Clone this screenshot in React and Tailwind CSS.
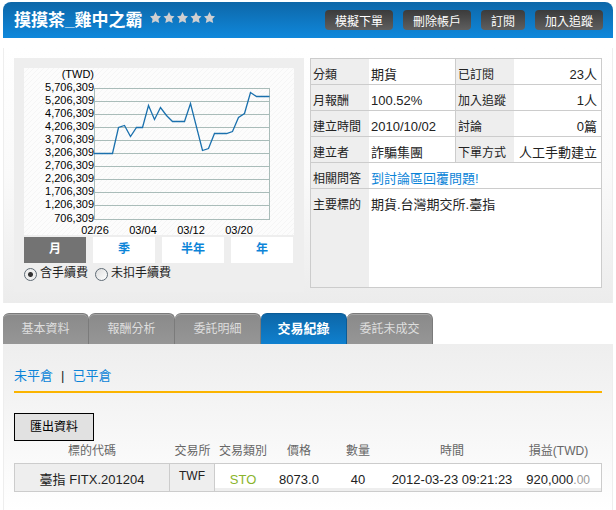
import React, { useState } from "react";

const axisLabels = [
  ["5,706,309", 20],
  ["5,206,309", 33],
  ["4,706,309", 46],
  ["4,206,309", 59],
  ["3,706,309", 72],
  ["3,206,309", 85],
  ["2,706,309", 98],
  ["2,206,309", 111],
  ["1,706,309", 124],
  ["1,206,309", 137],
  ["706,309", 151],
];

const dateLabels = [
  ["02/26", 71],
  ["03/04", 119],
  ["03/12", 167],
  ["03/20", 215],
];

const equity =
  "70,85.5 88.5,85.5 94.5,59.5 100.5,57.5 106.5,68.5 112.5,59.5 118.5,59.5 124.5,37.5 130.5,51.5 136.5,39.5 142.5,47.5 148.5,53.5 160.5,53.5 166.5,35.5 178.5,82.5 184.5,80.5 190.5,65.5 202.5,65.5 208.5,63.5 214.5,49.5 220.5,45.5 226.5,24.5 232.5,28.5 245.5,28.5";

function Stars() {
  return (
    <svg width="66" height="12" viewBox="0 0 66 12" fill="#cfcfd1" role="img" aria-label="評等">
      {[0, 1, 2, 3, 4].map((i) => (
        <path
          key={i}
          transform={`translate(${i * 13.5} 0)`}
          d="M5.5 0 L7.3 3.7 L11 4.2 L8.4 7 L9.2 11 L5.5 9.2 L1.8 11 L2.6 7 L0 4.2 L3.7 3.7 Z"
        />
      ))}
    </svg>
  );
}

function Chart() {
  return (
    <svg width="270" height="167" viewBox="0 0 270 167" className="block">
      <defs>
        <pattern id="hatch" width="5" height="5" patternUnits="userSpaceOnUse">
          <rect width="5" height="5" fill="#fcfcfc" />
          <path d="M0 5 L5 0" stroke="#f5f5f5" strokeWidth="1" />
        </pattern>
      </defs>
      <rect width="270" height="167" fill="url(#hatch)" />
      <g stroke="#a9bcb9">
        {axisLabels.map(([t, y]) => (
          <path key={t} d={`M70 ${y + 0.5} H246`} />
        ))}
        <path d="M70.5 20 V152 M245.5 20 V152" />
      </g>
      <polyline points={equity} fill="none" stroke="#1a70ad" strokeWidth="1.3" />
      <g fontSize="11" fill="#000" className="font-['Liberation_Sans',sans-serif]">
        <text x="70" y="10" textAnchor="end">(TWD)</text>
        {axisLabels.map(([t, y]) => (
          <text key={t} x="70" y={y + 3} textAnchor="end">{t}</text>
        ))}
        {dateLabels.map(([t, x]) => (
          <text key={t} x={x} y="166" textAnchor="middle">{t}</text>
        ))}
      </g>
    </svg>
  );
}

function Label({ children, divider, top = true }) {
  return (
    <th
      scope="row"
      className={`bg-[#eee] pt-2 pl-0.5 text-left align-top text-xs leading-4 font-normal whitespace-nowrap border-[#ccc] ${divider ? "border-l" : ""} ${top ? "border-t" : ""}`}
    >
      {children}
    </th>
  );
}

function Value({ children, right, top = true, span }) {
  return (
    <td
      colSpan={span}
      className={`bg-white pt-2 align-top text-[13px] leading-4 whitespace-nowrap border-[#ccc] ${right ? "pr-1 text-right" : "pl-0.5"} ${top ? "border-t" : ""}`}
    >
      {children}
    </td>
  );
}

function InfoTable() {
  const rows = [
    ["分類", "期貨", "已訂閱", "23人"],
    ["月報酬", "100.52%", "加入追蹤", "1人"],
    ["建立時間", "2010/10/02", "討論", "0篇"],
    ["建立者", "詐騙集團", "下單方式", "人工手動建立"],
  ];
  return (
    <table className="h-[230px] min-w-0 flex-1 table-fixed border-separate border-spacing-0 border border-[#ccc]">
      <colgroup>
        <col className="w-[58px]" />
        <col className="w-[86px]" />
        <col className="w-[59px]" />
        <col />
      </colgroup>
      <tbody>
        {rows.map((r, i) => (
          <tr key={r[0]} className={i ? "h-[26px]" : "h-[25px]"}>
            <Label top={i > 0}>{r[0]}</Label>
            <Value top={i > 0}>{r[1]}</Value>
            <Label top={i > 0} divider>{r[2]}</Label>
            <Value top={i > 0} right>{r[3]}</Value>
          </tr>
        ))}
        <tr className="h-[26px]">
          <Label>相關問答</Label>
          <Value span={3}><a href="#discuss" className="text-[#0b84d8]">到討論區回覆問題!</a></Value>
        </tr>
        <tr>
          <Label>主要標的</Label>
          <Value span={3}>期貨.台灣期交所.臺指</Value>
        </tr>
      </tbody>
    </table>
  );
}

export default function App() {
  const [range, setRange] = useState("月");
  const [tab, setTab] = useState("交易紀錄");
  const [fee, setFee] = useState("with");
  const cell = "border-y border-[#ccc] bg-white pt-1 shadow-[inset_0_-3px_#eee]";

  return (
    <main className="min-h-[510px] bg-white px-[3px] pt-0.5 font-['Liberation_Sans','Noto_Sans_CJK_TC',sans-serif] text-[#222]">
      <header className="flex h-9 items-start rounded-t-lg bg-linear-to-b from-[#0d67a8] to-[#0f88dc] pr-2.5 pl-[11px]">
        <h1 className="pt-[7px] text-[17px] leading-6 font-bold whitespace-nowrap text-white">摸摸茶_雞中之霸</h1>
        <div className="ml-2 pt-2.5"><Stars /></div>
        <nav className="ml-auto flex gap-2.5 pt-2">
          {["模擬下單", "刪除帳戶", "訂閱", "加入追蹤"].map((t) => (
            <button key={t} className="h-5 rounded-sm bg-linear-to-b from-[#3b3b3b] to-[#5f5f5f] px-2.5 pt-1 text-xs leading-4 whitespace-nowrap text-white">
              {t}
            </button>
          ))}
        </nav>
      </header>

      <section className="mt-2.5 flex items-start gap-1.5 border-x border-[#eee] bg-linear-to-b from-white via-[#fafafa] to-[#ececec] px-2.5 pt-2.5 pb-[11px]">
        <div className="h-[234px] w-[290px] shrink-0 bg-[#eee] p-2.5">
          <Chart />
          <div className="mt-0.5 flex gap-[7px]">
            {["月", "季", "半年", "年"].map((t) => (
              <button
                key={t}
                onClick={() => setRange(t)}
                className={`h-[26px] w-[62px] pb-0.5 text-xs font-bold ${range === t ? "bg-[#737373] text-white" : "bg-white text-[#0b84d8]"}`}
              >
                {t}
              </button>
            ))}
          </div>
          <div className="mt-0.5 flex gap-[7px] text-xs leading-4">
            {[["with", "含手續費"], ["without", "未扣手續費"]].map(([v, t]) => (
              <label key={v} className="flex items-center gap-[3px]">
                <input
                  type="radio"
                  name="fee"
                  checked={fee === v}
                  onChange={() => setFee(v)}
                  className="mt-0.5 size-[13px] appearance-none rounded-full border border-[#5f6b75] bg-linear-to-br from-[#ddd] to-white checked:bg-[radial-gradient(circle,#333_2px,#eee_3px)]"
                />
                {t}
              </label>
            ))}
          </div>
        </div>
        <InfoTable />
      </section>

      <div role="tablist" className="mt-2.5 flex">
        {["基本資料", "報酬分析", "委託明細", "交易紀錄", "委託未成交"].map((t) => (
          <button
            key={t}
            role="tab"
            aria-selected={tab === t}
            onClick={() => setTab(t)}
            className={`h-[31px] w-[86px] rounded-t-md border-t border-r whitespace-nowrap ${
              tab === t
                ? "border-[#0a5b96] bg-linear-to-b from-[#0d67a8] to-[#0f80cf] text-[13px] font-bold text-white"
                : "border-[#7b7b7b] bg-linear-to-b from-[#8a8a8a] to-[#969696] text-xs text-[#dedede] shadow-[inset_0_1px_#a5a5a5]"
            }`}
          >
            {t}
          </button>
        ))}
      </div>

      <section className="min-h-[166px] border-x border-[#eee] bg-linear-to-b from-[#eee] to-white px-2.5">
        <div className="flex h-[49px] items-start gap-2 border-b-2 border-[#fbb400] pt-6 text-[13px] leading-4">
          <a href="#open" className="text-[#0b84d8]">未平倉</a>
          <span>|</span>
          <a href="#closed" className="text-[#0b84d8]">已平倉</a>
        </div>
        <button className="mt-5 block h-7 w-20 border border-black bg-[#e1e1e1] text-xs text-black">匯出資料</button>
        <table className="w-full table-fixed border-separate border-spacing-0 text-center text-[13px] leading-4 whitespace-nowrap">
          <colgroup>
            <col className="w-[156px]" />
            <col className="w-[45px]" />
            <col className="w-[56px]" />
            <col className="w-[56px]" />
            <col className="w-[62px]" />
            <col className="w-[126px]" />
            <col />
          </colgroup>
          <thead>
            <tr className="h-[22px] text-xs text-[#666]">
              {["標的代碼", "交易所", "交易類別", "價格", "數量", "時間", "損益(TWD)"].map((t) => (
                <th key={t} scope="col" className="p-0 pb-0.5 font-normal">{t}</th>
              ))}
            </tr>
          </thead>
          <tbody>
            <tr className="h-[29px]">
              <td className="border border-[#ccc] bg-[#eee] pt-1">臺指 FITX.201204</td>
              <td className="border-y border-r border-[#ccc] bg-[#eee] pt-1 align-top text-xs">TWF</td>
              <td className={`${cell} text-[#8ab42c]`}>STO</td>
              <td className={cell}>8073.0</td>
              <td className={cell}>40</td>
              <td className={cell}>2012-03-23 09:21:23</td>
              <td className={`${cell} border-r pr-[11px] text-right`}>
                920,000<span className="text-xs text-[#999]">.00</span>
              </td>
            </tr>
          </tbody>
        </table>
      </section>
    </main>
  );
}
